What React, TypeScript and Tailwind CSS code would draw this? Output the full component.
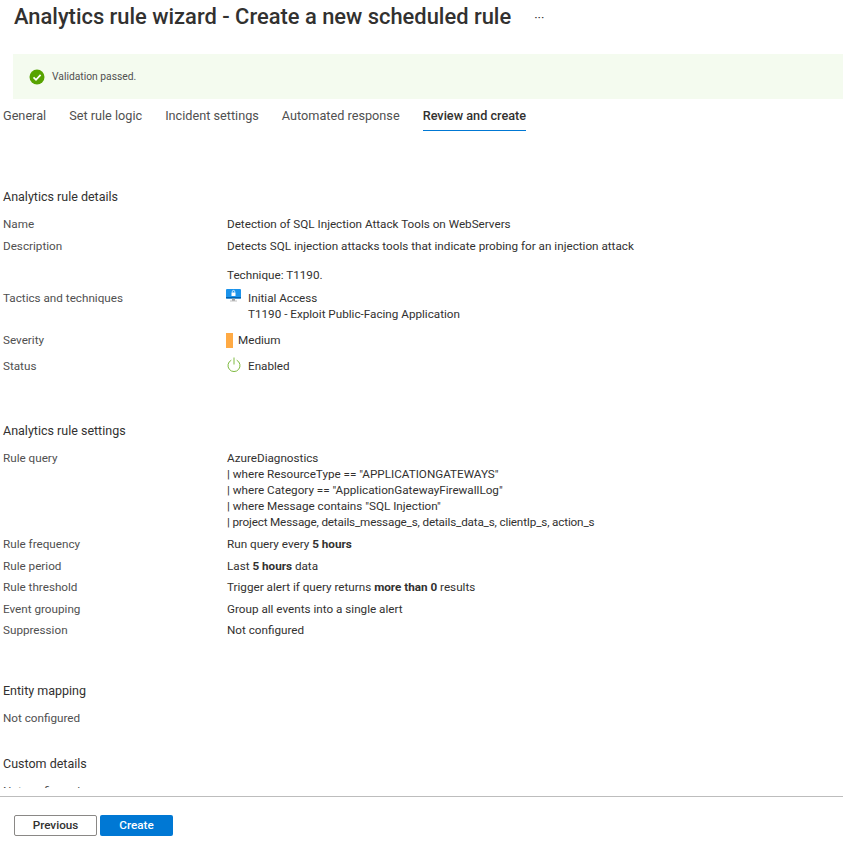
const tabs = ["General", "Set rule logic", "Incident settings", "Automated response", "Review and create"];

const Row = ({ label, className, children }: { label: string; className: string; children: React.ReactNode }) => (
  <div className={`flex leading-4 ${className}`}>
    <div className="w-[224px] shrink-0 text-[#505050]">{label}</div>
    <div className="flex-1 text-[#323130]">{children}</div>
  </div>
);

const Heading = ({ className, children }: { className: string; children: React.ReactNode }) => (
  <h2 className={`text-[12.5px] leading-[18px] text-[#323130] ${className}`}>{children}</h2>
);

const App = () => {
  return (
    <div className="h-[853px] w-[843px] overflow-hidden bg-white flex flex-col text-[11.7px] font-['Roboto',sans-serif]">
      <div className="flex items-center pl-[14px] pt-[2px] h-[32px]">
        <h1 className="text-[21.9px] font-medium leading-7 text-[#323130]">Analytics rule wizard - Create a new scheduled rule</h1>
        <span className="ml-[23px] text-[13px] leading-none text-[#323130]">···</span>
      </div>

      <div className="ml-[13px] mt-[22px] h-[45px] bg-[#f4fbef] flex items-center pl-[16px] gap-[7px] shrink-0">
        <svg width="16" height="16" viewBox="0 0 16 16">
          <circle cx="8" cy="8" r="7.5" fill="#57a300" />
          <path d="M4.5 8.3 7 10.8 11.6 5.8" fill="none" stroke="#fff" strokeWidth="1.7" />
        </svg>
        <span className="text-[10.3px] text-[#505050]">Validation passed.</span>
      </div>

      <div className="flex pl-[3px] gap-[23px] h-[32px] shrink-0">
        {tabs.map((tab, i) => (
          <div
            key={tab}
            className={
              i === 4
                ? "text-[12.7px] pt-[8px] leading-[18px] text-[#323130] font-medium border-b-[1.5px] border-[#0078d4]"
                : "text-[12.7px] pt-[8px] leading-[18px] text-[#505050]"
            }
          >
            {tab}
          </div>
        ))}
      </div>

      <div className="h-[657px] shrink-0 overflow-hidden pl-[3px]">
        <Heading className="mt-[57px]">Analytics rule details</Heading>
        <Row label="Name" className="mt-[10px]">Detection of SQL Injection Attack Tools on WebServers</Row>
        <Row label="Description" className="mt-[6px]">
          <p>Detects SQL injection attacks tools that indicate probing for an injection attack</p>
          <p className="mt-[13px]">Technique: T1190.</p>
        </Row>
        <Row label="Tactics and techniques" className="mt-[7px]">
          <div className="flex">
            <svg className="mt-[-1px] -ml-px mr-[7px] shrink-0" width="15" height="14" viewBox="0 0 15 14">
              <rect x="0" y="0" width="15" height="9.5" rx="1" fill="#1b93eb" />
              <rect x="0" y="8" width="15" height="1.5" fill="#0063b1" />
              <rect x="6" y="9.5" width="3" height="2.5" fill="#a0a1a2" />
              <rect x="4" y="11.5" width="7" height="1" fill="#c4c4c4" />
              <rect x="5.5" y="3.5" width="4" height="3.5" fill="#fff" />
              <path d="M6.3 3.5V2.6a1.2 1.2 0 0 1 2.4 0v.9" fill="none" stroke="#fff" strokeWidth=".8" />
            </svg>
            <div>
              <p>Initial Access</p>
              <p>T1190 - Exploit Public-Facing Application</p>
            </div>
          </div>
        </Row>
        <Row label="Severity" className="mt-[10px]">
          <div className="flex items-center gap-[5px] -ml-px">
            <span className="w-[7px] h-[15px] bg-[#ffaa44]" />
            <span>Medium</span>
          </div>
        </Row>
        <Row label="Status" className="mt-[10px]">
          <div className="flex items-center gap-[7px]">
            <svg className="-mt-[3px]" width="14" height="15" viewBox="0 0 14 15" fill="none" stroke="#7fba42" strokeWidth="1">
              <path d="M4.3 3.2a6 6 0 1 0 5.4 0" />
              <path d="M7 0.5v7" />
            </svg>
            <span>Enabled</span>
          </div>
        </Row>

        <Heading className="mt-[48px]">Analytics rule settings</Heading>
        <Row label="Rule query" className="mt-[10px]">
          <p>AzureDiagnostics</p>
          <p>| where ResourceType == "APPLICATIONGATEWAYS"</p>
          <p>| where Category == "ApplicationGatewayFirewallLog"</p>
          <p>| where Message contains "SQL Injection"</p>
          <p className="tracking-[-0.16px]">| project Message, details_message_s, details_data_s, clientIp_s, action_s</p>
        </Row>
        <Row label="Rule frequency" className="mt-[6px]">Run query every <b className="font-bold">5 hours</b></Row>
        <Row label="Rule period" className="mt-[6px]">Last <b className="font-bold">5 hours</b> data</Row>
        <Row label="Rule threshold" className="mt-[5px]">Trigger alert if query returns <b className="font-bold">more than 0</b> results</Row>
        <Row label="Event grouping" className="mt-[6px]">Group all events into a single alert</Row>
        <Row label="Suppression" className="mt-[5px]">Not configured</Row>

        <Heading className="mt-[44px]">Entity mapping</Heading>
        <p className="mt-[10px] leading-4 text-[#505050]">Not configured</p>
        <Heading className="mt-[29px]">Custom details</Heading>
        <p className="mt-[10px] leading-4 text-[#505050]">Not configured</p>
      </div>

      <div className="mt-[8px] border-t border-[#bdbdbd] flex gap-[3px] pl-[14px] pt-[18px]">
        <button className="w-[83px] h-[21px] border border-[#8a8886] rounded-[2px] text-[#323130] font-medium">Previous</button>
        <button className="w-[73px] h-[21px] bg-[#0078d4] rounded-[2px] text-white font-medium">Create</button>
      </div>
    </div>
  );
};

export default App;
